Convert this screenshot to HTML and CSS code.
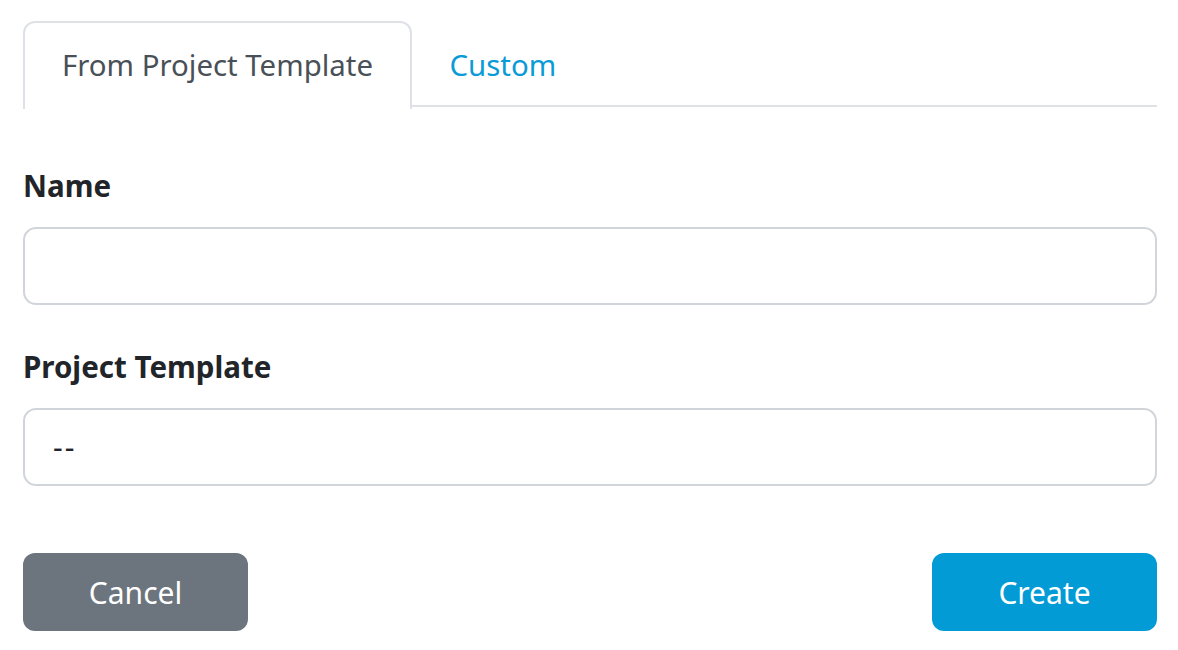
FILE: index.html
```html
<!DOCTYPE html>
<html lang="en">
<head>
<meta charset="utf-8">
<title>New Project</title>
<link rel="stylesheet" href="styles.css">
</head>
<body>
<div class="page">
  <div class="tabs">
    <div class="tab active">From Project Template</div>
    <div class="tab">Custom</div>
  </div>
  <form class="form">
    <div class="field">
      <label class="label">Name</label>
      <div class="input"></div>
    </div>
    <div class="field">
      <label class="label">Project Template</label>
      <div class="input select">--</div>
    </div>
    <div class="actions">
      <button type="button" class="btn btn-cancel">Cancel</button>
      <button type="button" class="btn btn-create">Create</button>
    </div>
  </form>
</div>
</body>
</html>
```
FILE: styles.css
```css
html, body {
  margin: 0;
  padding: 0;
  background: #ffffff;
}
body {
  font-family: "Noto Sans", "Open Sans", "Liberation Sans", sans-serif;
  color: #212529;
}
.page {
  padding: 21px 21px 0 23px;
}
.tabs {
  display: flex;
  border-bottom: 2px solid #dee2e6;
  height: 84px;
}
.tab {
  font-size: 29.4px;
  line-height: 84px;
  padding: 0 36px;
  color: #0a9bd6;
  border: 2px solid transparent;
  border-bottom: none;
}
.tab.active {
  color: #495057;
  background: #fff;
  border-color: #dee2e6;
  border-radius: 12px 12px 0 0;
  height: 86px;
  padding: 0 36.5px 0 37px;
}
.form {
  display: flex;
  flex-direction: column;
  padding-top: 59px;
}
.field {
  display: flex;
  flex-direction: column;
}
.field + .field {
  margin-top: 42px;
}
.label {
  font-weight: 700;
  font-size: 29.5px;
  line-height: 40px;
  margin-bottom: 21px;
  color: #212529;
}
.input {
  height: 74px;
  border: 2px solid #d1d5da;
  border-radius: 13px;
  font-size: 30px;
  line-height: 74px;
  padding: 0 28px;
  color: #212529;
  letter-spacing: 2px;
}
.actions {
  display: flex;
  justify-content: space-between;
  margin-top: 67px;
}
.btn {
  width: 225px;
  height: 78px;
  border: none;
  border-radius: 12px;
  color: #ffffff;
  font-family: "Noto Sans", "Open Sans", "Liberation Sans", sans-serif;
  font-size: 30px;
  padding: 0;
}
.btn-cancel {
  background: #6c757d;
}
.btn-create {
  background: #039bd5;
}
```
